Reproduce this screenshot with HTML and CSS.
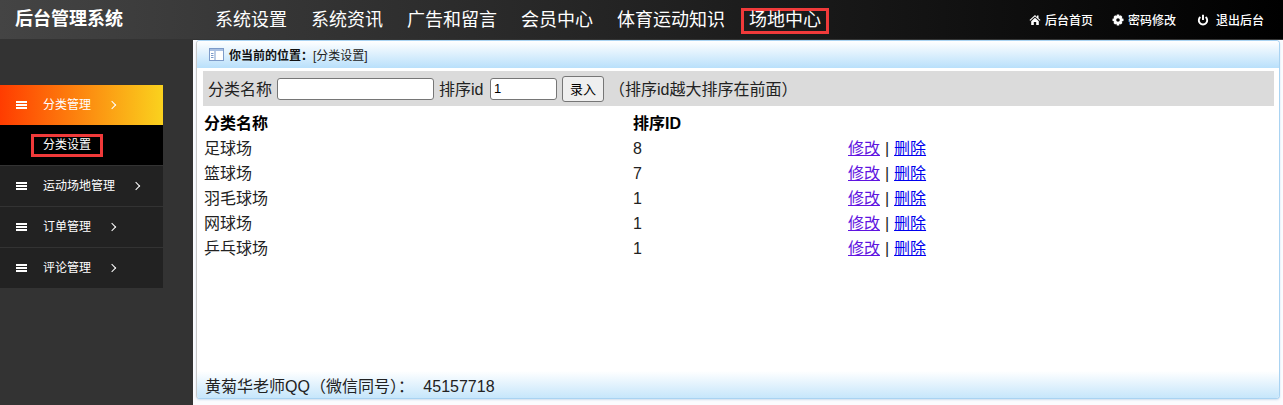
FILE: index.html
```html
<!DOCTYPE html>
<html lang="zh-CN">
<head>
<meta charset="utf-8">
<title>后台管理系统</title>
<link rel="stylesheet" href="styles.css">
</head>
<body>
<header class="topbar">
  <div class="logo">后台管理系统</div>
  <nav class="mainnav">
    <a href="#">系统设置</a>
    <a href="#">系统资讯</a>
    <a href="#">广告和留言</a>
    <a href="#">会员中心</a>
    <a href="#">体育运动知识</a>
    <a href="#" class="boxed">场地中心</a>
  </nav>
  <div class="toplinks">
    <a href="#"><svg class="ti" viewBox="0 0 12 12"><path d="M6 1 0.5 6l.7.8L6 2.6l4.8 4.2.7-.8L9.5 4.2V1.6H8v1.3zM2.2 7.2V11h2.6V8h2.4v3h2.6V7.2L6 3.8z" fill="#fff"/></svg>后台首页</a>
    <a href="#"><svg class="ti" viewBox="0 0 12 12"><path fill-rule="evenodd" d="M4.8.5h2.4l.3 1.5 1.3-.7 1.6 1.6-.7 1.4 1.8.4v2.4l-1.8.4.7 1.4-1.6 1.6-1.3-.7-.3 1.7H4.8l-.4-1.7-1.3.7-1.6-1.6.7-1.4L.5 7.1V4.7l1.7-.4-.7-1.4 1.6-1.6 1.3.7zM6 4.2a1.8 1.8 0 1 0 0 3.6 1.8 1.8 0 0 0 0-3.6z" fill="#fff"/></svg>密码修改</a>
    <a href="#"><svg class="ti power" viewBox="0 0 12 12"><path d="M3.4 3a4.2 4.2 0 1 0 5.2 0M6 .8V6" fill="none" stroke="#fff" stroke-width="1.9"/></svg>退出后台</a>
  </div>
</header>
<div class="layout">
  <aside class="sidebar">
    <ul class="menu">
      <li class="item active"><span class="bars"></span><span class="label">分类管理</span><span class="chev"></span></li>
      <li class="sub"><span class="subbox">分类设置</span></li>
      <li class="item"><span class="bars"></span><span class="label">运动场地管理</span><span class="chev"></span></li>
      <li class="item"><span class="bars"></span><span class="label">订单管理</span><span class="chev"></span></li>
      <li class="item"><span class="bars"></span><span class="label">评论管理</span><span class="chev"></span></li>
    </ul>
  </aside>
  <div class="mainwrap">
    <main class="panel">
      <div class="crumb">
        <svg class="crumbicon" viewBox="0 0 15 13"><rect x=".5" y=".5" width="14" height="12" fill="#fff" stroke="#7d9bc9"/><rect x="1" y="1" width="13" height="2" fill="#a9c0e2"/><rect x="5.5" y="3" width="1" height="9" fill="#7d9bc9"/><path d="M2 5.5h2.5M2 7.5h2.5M2 9.5h2.5" stroke="#7d9bc9"/></svg>
        <b>你当前的位置：</b><span>[分类设置]</span>
      </div>
      <div class="content">
        <form class="formbar">
          <span class="flabel">分类名称</span>
          <input class="name" type="text">
          <span class="flabel idlabel">排序id</span>
          <input class="order" type="text" value="1">
          <button type="button">录入</button>
          <span class="flabel">（排序id越大排序在前面）</span>
        </form>
        <table>
          <thead><tr><th>分类名称</th><th>排序ID</th><th></th></tr></thead>
          <tbody>
            <tr><td>足球场</td><td>8</td><td><a href="#" class="v">修改</a> | <a href="#">删除</a></td></tr>
            <tr><td>篮球场</td><td>7</td><td><a href="#" class="v">修改</a> | <a href="#">删除</a></td></tr>
            <tr><td>羽毛球场</td><td>1</td><td><a href="#" class="v">修改</a> | <a href="#">删除</a></td></tr>
            <tr><td>网球场</td><td>1</td><td><a href="#" class="v">修改</a> | <a href="#">删除</a></td></tr>
            <tr><td>乒乓球场</td><td>1</td><td><a href="#" class="v">修改</a> | <a href="#">删除</a></td></tr>
          </tbody>
        </table>
      </div>
      <footer class="foot">黄菊华老师QQ（微信同号）： 45157718</footer>
    </main>
  </div>
</div>
</body>
</html>
```
FILE: styles.css
```css
* { box-sizing: border-box; }
html, body { margin: 0; height: 100%; overflow: hidden; }
body {
  width: 1283px; height: 405px;
  background: #333;
  font-family: "Liberation Sans", "Noto Sans CJK SC", sans-serif;
  font-size: 16px;
  color: #222;
  display: flex; flex-direction: column;
}
.topbar {
  height: 39px; flex: none;
  display: flex; align-items: center;
  background: linear-gradient(to right, #444, #000);
  color: #fff;
}
.logo { width: 215px; padding-left: 15px; font-size: 18px; font-weight: 700; line-height: 39px; flex: none; }
.mainnav { display: flex; flex: 1; gap: 8px; align-items: center; }
.mainnav a { color: #fff; text-decoration: none; font-size: 18px; line-height: 24px; margin-right: 16px; }
.mainnav a.boxed { border: 3px solid #f03a3a; padding: 0 5px; margin: 3px 0 0 -8px; height: 26px; line-height: 18px; }
.toplinks { display: flex; gap: 19px; padding-right: 19px; font-size: 12px; }
.toplinks a { color: #fff; text-decoration: none; display: flex; align-items: center; font-weight: 500; }
.ti { width: 12px; height: 12px; margin-right: 4px; }
.ti.power { margin: 0 7px 0 2px; }
.layout { flex: 1; display: flex; min-height: 0; }
.sidebar { width: 193px; flex: none; padding-top: 46px; }
.menu { list-style: none; margin: 0; padding: 0; width: 163px; font-size: 12px; color: #fff; }
.item { height: 40px; display: flex; align-items: center; padding: 0 0 4px 16px; background: #222; margin-top: 1px; }
.item.active { background: linear-gradient(to right, #ff3c00, #fad21e); margin-top: 0; }
.bars {
  width: 11px; height: 8px; margin: 4px 16px 0 0; flex: none;
  background: repeating-linear-gradient(to bottom, #fff 0, #fff 2px, transparent 2px, transparent 3px);
}
.chev {
  width: 6px; height: 6px; margin: 4px 0 0 18px;
  border-top: 1.5px solid #fff; border-right: 1.5px solid #fff;
  transform: rotate(45deg);
}
.sub { height: 40px; background: #000; display: flex; align-items: center; padding-left: 31px; }
.subbox { border: 3px solid #f03a3a; padding: 0 9px; height: 23px; line-height: 16px; }
.mainwrap { flex: 1; background: #fbfbfe; border-top: 1px solid #333; min-width: 0; display: flex; }
.panel {
  width: 1084px; margin: 0 0 6px 3px;
  background: #fff;
  border: 1px solid #a9d3f2; border-left-color: #c9c9c9;
  border-radius: 4px;
  box-shadow: 0 1px 2px rgba(120, 170, 210, .35);
  display: flex; flex-direction: column;
  overflow: hidden;
}
.crumb {
  height: 27px; flex: none; display: flex; align-items: center; padding: 0 0 1px 12px;
  background: linear-gradient(to bottom, #fff, #b9e0fb);
  font-size: 12px; color: #222;
}
.crumbicon { width: 15px; height: 13px; margin-right: 5px; }
.crumb b { color: #111; }
.content { flex: 1; padding: 3px 6px 0; min-height: 0; }
.formbar {
  height: 35px; background: #dbdbdb; display: flex; align-items: center; gap: 5px; padding-left: 5px; margin: 0; width: 1071px;
}
.flabel { margin-bottom: 2px; }
.idlabel { width: 46px; }
.name { width: 157px; height: 22px; margin: 0; padding: 1px 2px; border: 1px solid #767676; border-radius: 3px; background: #fff; }
.order { width: 67px; height: 22px; margin: 0; padding: 1px 3px; border: 1px solid #767676; border-radius: 3px; font: 13px "Liberation Sans", sans-serif; background: #fff; }
button { height: 26px; width: 42px; padding: 0; font: 13px "Liberation Sans", "Noto Sans CJK SC", sans-serif; background: #efefef; border: 1px solid #767676; border-radius: 3px; color: #000; }
table { border-collapse: collapse; width: 1071px; table-layout: fixed; margin-top: 4px; }
th, td { height: 25px; padding: 0 1px; text-align: left; font-size: 16px; line-height: 25px; }
th { color: #000; height: 26px; }
th:nth-child(1), td:nth-child(1) { width: 429px; }
th:nth-child(2), td:nth-child(2) { width: 215px; }
td:last-child { word-spacing: .5px; }
a { color: #00e; }
a.v { color: #5f14e0; }
.foot {
  height: 27px; flex: none; padding: 6px 0 0 8px; line-height: 20px; word-spacing: 5px;
  background: linear-gradient(to bottom, #fff, #c6e6fb);
  color: #222;
}
```
